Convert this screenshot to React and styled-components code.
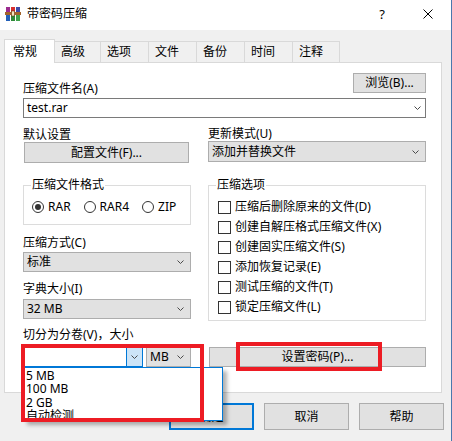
import React from 'react';
import styled, { createGlobalStyle } from 'styled-components';

const uiFont = `"Segoe UI", "Noto Sans", "Noto Sans CJK SC", sans-serif`;

const colors = {
  face: '#f0f0f0',
  button: '#e1e1e1',
  buttonBorder: '#adadad',
  tabBorder: '#d9d9d9',
  groupBorder: '#dcdcdc',
  accent: '#0078d7',
  accentLight: '#cce4f7',
  mark: '#ed1c24',
};

const GlobalStyle = createGlobalStyle`
  html, body {
    margin: 0;
    padding: 0;
    background: ${colors.face};
  }
  body {
    font-family: ${uiFont};
    font-size: 12px;
    color: #000;
  }
  * { box-sizing: border-box; }
`;

const tabs = [
  { label: '常规', w: 51 },
  { label: '高级', w: 47 },
  { label: '选项', w: 49 },
  { label: '文件', w: 49 },
  { label: '备份', w: 49 },
  { label: '时间', w: 49 },
  { label: '注释', w: 48 },
];

const options = [
  '压缩后删除原来的文件(D)',
  '创建自解压格式压缩文件(X)',
  '创建固实压缩文件(S)',
  '添加恢复记录(E)',
  '测试压缩的文件(T)',
  '锁定压缩文件(L)',
];

const volumes = ['5 MB', '100 MB', '2 GB', '自动检测'];

const Chevron = () => (
  <ChevronSvg viewBox="0 0 7 4" width="7" height="4">
    <polyline points="0.5,0.5 3.5,3.5 6.5,0.5" fill="none" stroke="#4a4a4a" strokeWidth="1" />
  </ChevronSvg>
);

const AppIcon = () => (
  <IconSvg viewBox="0 0 16 16" width="16" height="16">
    <rect x="1" y="1" width="4" height="8" fill="#9b2b8f" />
    <rect x="1" y="9" width="4" height="6" fill="#2360b8" />
    <rect x="6" y="1" width="4" height="8" fill="#d62f2f" />
    <rect x="6" y="9" width="4" height="6" fill="#2f8a3a" />
    <rect x="11" y="1" width="4" height="8" fill="#3d4aa8" />
    <rect x="11" y="9" width="4" height="6" fill="#3fa34a" />
    <rect x="0" y="6" width="16" height="3" fill="#a2642c" />
    <rect x="6.5" y="5" width="3" height="5" fill="#f4e4c1" stroke="#6b3a14" strokeWidth="0.6" />
  </IconSvg>
);

const App = () => (
  <>
    <GlobalStyle />
    <Window>
      <TitleBar>
        <AppIcon />
        <Title>带密码压缩</Title>
        <HelpGlyph>?</HelpGlyph>
        <CloseSvg viewBox="0 0 10 10" width="10" height="10">
          <path d="M0.5 0.5 L9.5 9.5 M9.5 0.5 L0.5 9.5" stroke="#000" strokeWidth="1" />
        </CloseSvg>
      </TitleBar>

      <Body>
        <TabStrip>
          {tabs.map((t, i) => (
            <Tab key={t.label} $w={t.w} $active={i === 0} $first={i === 0}>{t.label}</Tab>
          ))}
        </TabStrip>

        <Panel>
          <TopRow>
            <Label $bottom={2}>压缩文件名(A)</Label>
            <Button $w={73} $h={20} $bottom={5}>浏览(B)...</Button>
          </TopRow>
          <EditCombo>
            <span>test.rar</span>
            <Chevron />
          </EditCombo>

          <TwoCol $top={10}>
            <Column>
              <Label>默认设置</Label>
              <Button $w={165} $h={21} $left={1}>配置文件(F)...</Button>
            </Column>
            <Column>
              <Label $top={-1}>更新模式(U)</Label>
              <Select $h={21}>
                <span>添加并替换文件</span>
                <Chevron />
              </Select>
            </Column>
          </TwoCol>

          <TwoCol $top={15}>
            <Column>
              <Group $pad="7px 7px 9px">
                <Legend>压缩文件格式</Legend>
                <RadioRow>
                  <RadioItem><Radio $checked />RAR</RadioItem>
                  <RadioItem><Radio />RAR4</RadioItem>
                  <RadioItem><Radio />ZIP</RadioItem>
                </RadioRow>
              </Group>
              <Label $top={11}>压缩方式(C)</Label>
              <Select $top={2}>
                <span>标准</span>
                <Chevron />
              </Select>
              <Label $top={10}>字典大小(I)</Label>
              <Select $top={3}>
                <span>32 MB</span>
                <Chevron />
              </Select>
            </Column>
            <Column>
              <Group $pad="5px 7px 3px">
                <Legend>压缩选项</Legend>
                {options.map(o => (
                  <CheckRow key={o}><Check />{o}</CheckRow>
                ))}
              </Group>
            </Column>
          </TwoCol>

          <TwoCol $top={7} $end>
            <Column>
              <Label>切分为分卷(V)，大小</Label>
              <SplitRow>
                <SplitCombo>
                  <SplitEdit />
                  <SplitButton><Chevron /></SplitButton>
                  <DropList>
                    {volumes.map(v => <DropItem key={v}>{v}</DropItem>)}
                  </DropList>
                  <Mark style={{ left: -3, top: -4, width: 183, height: 78 }} />
                </SplitCombo>
                <Select $w={45} $padLeft={3}>
                  <span>MB</span>
                  <Chevron />
                </Select>
              </SplitRow>
            </Column>
            <PasswordWrap>
              <Button $w={217} $h={20} $left={1}>设置密码(P)...</Button>
              <Mark style={{ left: 28, top: -5, width: 146, height: 29 }} />
            </PasswordWrap>
          </TwoCol>
        </Panel>

        <Footer>
          <DialogButton $default>确定</DialogButton>
          <DialogButton>取消</DialogButton>
          <DialogButton>帮助</DialogButton>
        </Footer>
      </Body>
    </Window>
  </>
);

const Window = styled.div`
  width: 452px;
  height: 441px;
  background: ${colors.face};
  border-right: 1px solid #4a78ad;
  overflow: hidden;
`;

const TitleBar = styled.div`
  height: 30px;
  background: #fff;
  display: flex;
  align-items: center;
  padding: 0 18px 2px 5px;
`;

const IconSvg = styled.svg`
  display: block;
  flex: none;
`;

const Title = styled.div`
  margin-left: 6px;
  font-size: 12px;
  line-height: 16px;
`;

const HelpGlyph = styled.div`
  margin-left: auto;
  width: 10px;
  margin-right: 36px;
  text-align: center;
  font-size: 13px;
  line-height: 16px;
`;

const CloseSvg = styled.svg`
  display: block;
`;

const Body = styled.div`
  padding: 9px 9px 0 4px;
`;

const TabStrip = styled.div`
  display: flex;
  align-items: flex-end;
  height: 23px;
`;

const Tab = styled.div`
  position: relative;
  width: ${p => p.$w}px;
  height: ${p => (p.$active ? 24 : 21)}px;
  margin-left: ${p => (p.$first ? 0 : -1)}px;
  margin-bottom: ${p => (p.$active ? -1 : 0)}px;
  z-index: ${p => (p.$active ? 2 : 1)};
  padding-left: ${p => (p.$active ? 8 : 6)}px;
  display: flex;
  align-items: center;
  background: ${p => (p.$active ? '#fff' : colors.face)};
  border: 1px solid ${colors.tabBorder};
  border-bottom: none;
  line-height: 14px;
`;

const Panel = styled.div`
  height: 331px;
  background: #fff;
  border: 1px solid ${colors.tabBorder};
  padding: 10px 15px 0 18px;
`;

const TopRow = styled.div`
  display: flex;
  justify-content: space-between;
  align-items: flex-end;
`;

const Label = styled.div`
  line-height: 14px;
  margin-top: ${p => p.$top || 0}px;
  margin-bottom: ${p => p.$bottom || 0}px;
  white-space: nowrap;
`;

const Button = styled.div`
  width: ${p => p.$w}px;
  height: ${p => p.$h}px;
  margin-left: ${p => p.$left || 0}px;
  margin-bottom: ${p => p.$bottom || 0}px;
  background: ${colors.button};
  border: 1px solid ${colors.buttonBorder};
  display: flex;
  align-items: center;
  justify-content: center;
  line-height: 14px;
`;

const ChevronSvg = styled.svg`
  display: block;
  flex: none;
`;

const EditCombo = styled.div`
  height: 20px;
  border: 1px solid #7a7a7a;
  background: #fff;
  display: flex;
  align-items: center;
  justify-content: space-between;
  padding: 0 4px 0 3px;
  line-height: 14px;
`;

const Select = styled.div`
  width: ${p => (p.$w ? `${p.$w}px` : 'auto')};
  height: ${p => p.$h || 20}px;
  margin-top: ${p => p.$top || 0}px;
  background: ${colors.button};
  border: 1px solid ${colors.buttonBorder};
  display: flex;
  align-items: center;
  justify-content: space-between;
  padding: 0 6px 0 ${p => p.$padLeft || 3}px;
  line-height: 14px;
  white-space: nowrap;
`;

const TwoCol = styled.div`
  display: grid;
  grid-template-columns: 168px 1fr;
  column-gap: 17px;
  margin-top: ${p => p.$top || 0}px;
  align-items: ${p => (p.$end ? 'end' : 'start')};
`;

const Column = styled.div`
  display: flex;
  flex-direction: column;
`;

const Group = styled.fieldset`
  margin: 0;
  min-width: 0;
  border: 1px solid ${colors.groupBorder};
  padding: ${p => p.$pad};
`;

const Legend = styled.legend`
  padding: 0 1px;
  line-height: 14px;
`;

const RadioRow = styled.div`
  display: flex;
  gap: 13px;
  height: 16px;
  align-items: center;
  padding-left: 1px;
`;

const RadioItem = styled.div`
  display: flex;
  align-items: center;
  gap: 4px;
  line-height: 14px;
`;

const Radio = styled.span`
  width: 12px;
  height: 12px;
  border-radius: 50%;
  border: 1px solid #333;
  background: #fff;
  display: flex;
  align-items: center;
  justify-content: center;

  &::after {
    content: '';
    display: ${p => (p.$checked ? 'block' : 'none')};
    width: 6px;
    height: 6px;
    border-radius: 50%;
    background: #333;
  }
`;

const CheckRow = styled.div`
  display: flex;
  align-items: center;
  gap: 4px;
  height: 20px;
  padding-left: 2px;
  line-height: 14px;
  white-space: nowrap;
`;

const Check = styled.span`
  flex: none;
  width: 13px;
  height: 13px;
  border: 1px solid #333;
  background: #fff;
`;

const SplitRow = styled.div`
  display: flex;
  gap: 3px;
  margin-top: 5px;
`;

const SplitCombo = styled.div`
  position: relative;
  width: 120px;
  height: 20px;
  display: flex;
  border: 1px solid ${colors.accent};
  background: #fff;
`;

const SplitEdit = styled.div`
  flex: 1;
`;

const SplitButton = styled.div`
  width: 16px;
  background: ${colors.accentLight};
  border-left: 1px solid ${colors.accent};
  display: flex;
  align-items: center;
  justify-content: center;
`;

const DropList = styled.div`
  position: absolute;
  top: 19px;
  left: -1px;
  width: 200px;
  height: 54px;
  background: #fff;
  border: 1px solid ${colors.accent};
  box-shadow: 4px 4px 4px rgba(0, 0, 0, 0.3);
  padding: 1px 0 0 2px;
  overflow: hidden;
  z-index: 3;
`;

const DropItem = styled.div`
  line-height: 13.3px;
  white-space: nowrap;
`;

const Mark = styled.div`
  position: absolute;
  border: 4px solid ${colors.mark};
  pointer-events: none;
  z-index: 4;
`;

const PasswordWrap = styled.div`
  position: relative;
`;

const Footer = styled.div`
  display: flex;
  justify-content: flex-end;
  gap: 10px;
  margin-top: 10px;
  padding-right: 0;
  margin-right: -2px;
`;

const DialogButton = styled.div`
  width: 85px;
  height: 27px;
  background: ${colors.button};
  border: ${p => (p.$default ? `2px solid ${colors.accent}` : `1px solid ${colors.buttonBorder}`)};
  display: flex;
  align-items: center;
  justify-content: center;
  font-size: 12px;
  line-height: 14px;
`;

export default App;
